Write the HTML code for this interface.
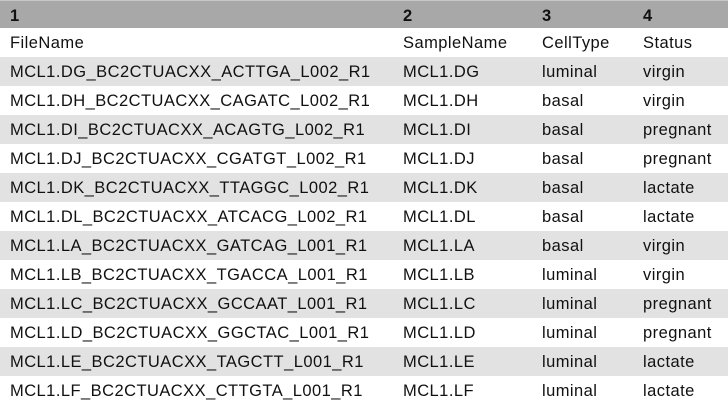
<!DOCTYPE html>
<html><head><style>
body{margin:0;width:728px;height:402px;overflow:hidden;background:#fff;font-family:"Liberation Sans",sans-serif;font-size:16.5px;letter-spacing:0.45px;color:#111}
.r{position:relative;height:29px;line-height:30px;white-space:nowrap}
.h{height:28px;line-height:30px;background:#a8a8a8;font-weight:bold;border-top:1px solid #c8c8c8;box-sizing:border-box}
.g{background:#e2e2e2}
.r span{position:absolute;top:0}
.a{left:10px}.b{left:403px}.c{left:542px}.d{left:643px}
</style></head><body>
<div class="r h"><span class="a">1</span><span class="b">2</span><span class="c">3</span><span class="d">4</span></div>
<div class="r"><span class="a">FileName</span><span class="b">SampleName</span><span class="c">CellType</span><span class="d">Status</span></div>
<div class="r g"><span class="a">MCL1.DG_BC2CTUACXX_ACTTGA_L002_R1</span><span class="b">MCL1.DG</span><span class="c">luminal</span><span class="d">virgin</span></div>
<div class="r"><span class="a">MCL1.DH_BC2CTUACXX_CAGATC_L002_R1</span><span class="b">MCL1.DH</span><span class="c">basal</span><span class="d">virgin</span></div>
<div class="r g"><span class="a">MCL1.DI_BC2CTUACXX_ACAGTG_L002_R1</span><span class="b">MCL1.DI</span><span class="c">basal</span><span class="d">pregnant</span></div>
<div class="r"><span class="a">MCL1.DJ_BC2CTUACXX_CGATGT_L002_R1</span><span class="b">MCL1.DJ</span><span class="c">basal</span><span class="d">pregnant</span></div>
<div class="r g"><span class="a">MCL1.DK_BC2CTUACXX_TTAGGC_L002_R1</span><span class="b">MCL1.DK</span><span class="c">basal</span><span class="d">lactate</span></div>
<div class="r"><span class="a">MCL1.DL_BC2CTUACXX_ATCACG_L002_R1</span><span class="b">MCL1.DL</span><span class="c">basal</span><span class="d">lactate</span></div>
<div class="r g"><span class="a">MCL1.LA_BC2CTUACXX_GATCAG_L001_R1</span><span class="b">MCL1.LA</span><span class="c">basal</span><span class="d">virgin</span></div>
<div class="r"><span class="a">MCL1.LB_BC2CTUACXX_TGACCA_L001_R1</span><span class="b">MCL1.LB</span><span class="c">luminal</span><span class="d">virgin</span></div>
<div class="r g"><span class="a">MCL1.LC_BC2CTUACXX_GCCAAT_L001_R1</span><span class="b">MCL1.LC</span><span class="c">luminal</span><span class="d">pregnant</span></div>
<div class="r"><span class="a">MCL1.LD_BC2CTUACXX_GGCTAC_L001_R1</span><span class="b">MCL1.LD</span><span class="c">luminal</span><span class="d">pregnant</span></div>
<div class="r g"><span class="a">MCL1.LE_BC2CTUACXX_TAGCTT_L001_R1</span><span class="b">MCL1.LE</span><span class="c">luminal</span><span class="d">lactate</span></div>
<div class="r"><span class="a">MCL1.LF_BC2CTUACXX_CTTGTA_L001_R1</span><span class="b">MCL1.LF</span><span class="c">luminal</span><span class="d">lactate</span></div>
</body></html>
